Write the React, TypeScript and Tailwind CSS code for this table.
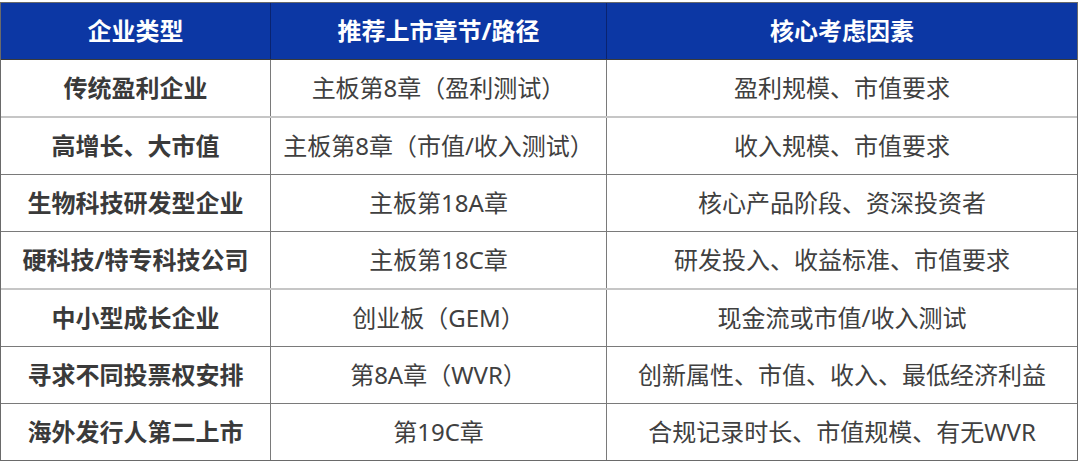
const rows = [
  { type: "传统盈利企业", path: "主板第8章（盈利测试）", factor: "盈利规模、市值要求", light: true },
  { type: "高增长、大市值", path: "主板第8章（市值/收入测试）", factor: "收入规模、市值要求", light: false },
  { type: "生物科技研发型企业", path: "主板第18A章", factor: "核心产品阶段、资深投资者", light: false },
  { type: "硬科技/特专科技公司", path: "主板第18C章", factor: "研发投入、收益标准、市值要求", light: true },
  { type: "中小型成长企业", path: "创业板（GEM）", factor: "现金流或市值/收入测试", light: false },
  { type: "寻求不同投票权安排", path: "第8A章（WVR）", factor: "创新属性、市值、收入、最低经济利益", light: false },
  { type: "海外发行人第二上市", path: "第19C章", factor: "合规记录时长、市值规模、有无WVR", light: false },
];

export default function App() {
  return (
    <div
      className="h-[463px] w-[1080px] overflow-hidden bg-white pt-[2px]"
      style={{ fontFamily: '"Noto Sans", "Noto Sans CJK SC", sans-serif' }}
    >
      <div className="w-[1078px] border border-[#6a6a6a]">
        {/* Header */}
        <div className="grid h-[57px] grid-cols-[270px_336px_1fr] border-b border-[#3a3a3a] bg-[#0c37a4] text-[24px] font-bold text-white">
          <div className="flex items-center justify-center border-r border-[#0a2370]">企业类型</div>
          <div className="flex items-center justify-center border-r border-[#0a2370]">推荐上市章节/路径</div>
          <div className="flex items-center justify-center">核心考虑因素</div>
        </div>

        {rows.map((row, i) => {
          const last = i === rows.length - 1;
          const border = last
            ? "h-[56px]"
            : row.light
              ? "h-[58px] border-b-2 border-[#c6c6c6]"
              : "h-[57px] border-b border-[#7a7a7a]";
          return (
            <div
              key={i}
              className={`grid grid-cols-[270px_336px_1fr] text-[24px] text-[#404040] ${border}`}
            >
              <div className="flex items-center justify-center border-r border-[#7a7a7a] font-bold text-[#3a3a3a]">
                {row.type}
              </div>
              <div className="flex items-center justify-center border-r border-[#7a7a7a]">{row.path}</div>
              <div className="flex items-center justify-center">{row.factor}</div>
            </div>
          );
        })}
      </div>
    </div>
  );
}
